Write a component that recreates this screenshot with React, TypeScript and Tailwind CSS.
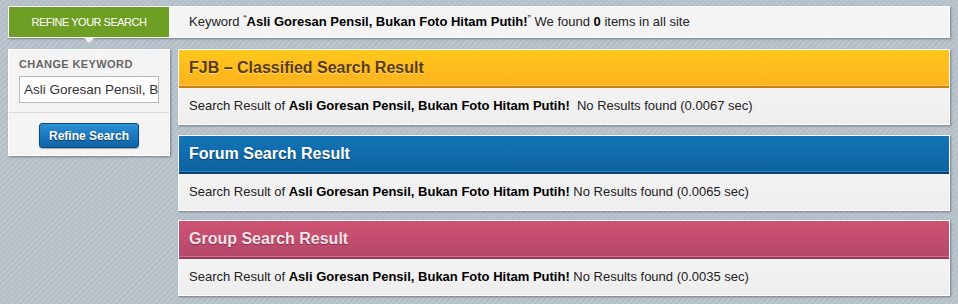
import React from "react";

const font = { fontFamily: '"Liberation Sans", Arial, sans-serif' };

function Panel({
  title,
  headerClass,
  titleClass,
  lineClass,
  keyword,
  tail,
}: {
  title: string;
  headerClass: string;
  titleClass: string;
  lineClass: string;
  keyword: string;
  tail: string;
}) {
  return (
    <div className="border border-white shadow-[1px_1px_2px_rgba(0,0,0,0.35)]">
      <div className={`h-[35px] flex items-center px-[10px] ${headerClass}`}>
        <span className={`text-[16px] font-bold ${titleClass}`}>{title}</span>
      </div>
      <div className={lineClass} />
      <div className="h-[36px] flex items-center px-[10px] bg-[linear-gradient(#f3f3f3,#eeeeee)] text-[13px] text-[#222] whitespace-pre">
        <span>
          Search Result of <b className="text-black">{keyword}</b>
          {tail}
        </span>
      </div>
    </div>
  );
}

export default function App() {
  const kw = "Asli Goresan Pensil, Bukan Foto Hitam Putih!";
  return (
    <div
      style={font}
      className="w-[958px] h-[304px] overflow-hidden bg-[repeating-linear-gradient(135deg,#b3bec6_0px,#b3bec6_2px,#bac5cd_2px,#bac5cd_4px)] pt-[6px] px-[8px]"
    >
      {/* top bar */}
      <div className="relative h-[32px] bg-[#f4f4f4] border border-white flex items-stretch shadow-[1px_1px_2px_rgba(0,0,0,0.35)]">
        <div className="w-[160px] bg-[#6f9e24] flex items-center justify-center text-white text-[11px] tracking-[-0.5px]">
          REFINE YOUR SEARCH
        </div>
        <div className="flex items-center pl-[20px] text-[13px] text-[#222]">
          <span>
            Keyword <span className="text-[10px] align-top">“</span>
            <b className="text-black">{kw}</b>
            <span className="text-[10px] align-top">”</span> We found <b className="text-black">0</b> items in all site
          </span>
        </div>
        <div className="absolute left-[74px] top-[30px] w-0 h-0 border-l-[6px] border-r-[6px] border-t-[6px] border-l-transparent border-r-transparent border-t-[#f4f4f4]" />
      </div>

      <div className="flex gap-[8px] mt-[11px]">
        {/* left panel */}
        <div className="w-[162px] h-[107px] self-start bg-[#f4f4f4] border border-white shadow-[1px_1px_2px_rgba(0,0,0,0.35)] flex flex-col">
          <div className="px-[10px] pt-[8px]">
            <div className="text-[11px] font-bold tracking-[0.4px] text-[#666] leading-[13px]">CHANGE KEYWORD</div>
            <input
              readOnly
              value="Asli Goresan Pensil, Bukan Foto Hitam Putih!"
              style={font}
              className="block mt-[5px] h-[27px] w-[140px] border border-[#b9b9b9] bg-white pl-[4px] pr-0 text-[13.5px] text-[#333] outline-none"
            />
          </div>
          <div className="mt-[9px] border-t border-[#dadada]" />
          <div className="flex justify-center pt-[10px]">
            <div className="w-[100px] h-[25px] rounded-[3px] border border-[#0b4a7e] bg-[linear-gradient(#2a8fd6,#0d62a6)] flex items-center justify-center text-white text-[12px] font-bold [text-shadow:0_1px_1px_rgba(0,0,0,0.5)] shadow-[0_1px_1px_rgba(0,0,0,0.3)]">
              Refine Search
            </div>
          </div>
        </div>

        {/* results */}
        <div className="flex-1 flex flex-col">
          <Panel
            title="FJB – Classified Search Result"
            headerClass="bg-[linear-gradient(#ffc81c,#ffb21f)]"
            titleClass="text-[#5b3a0e] [text-shadow:0_1px_0_rgba(255,230,150,0.8)]"
            lineClass="h-[3px] border-t border-[#ffc85a] bg-[#d17a0e]"
            keyword={kw}
            tail="  No Results found (0.0067 sec)"
          />
          <div className="h-[10px]" />
          <Panel
            title="Forum Search Result"
            headerClass="bg-[linear-gradient(#1274b6,#0f63a0)]"
            titleClass="text-white [text-shadow:0_1px_1px_rgba(0,0,0,0.4)]"
            lineClass="h-[3px] border-t border-[#2a85c2] bg-[#0b4170]"
            keyword={kw}
            tail=" No Results found (0.0065 sec)"
          />
          <div className="h-[9px]" />
          <Panel
            title="Group Search Result"
            headerClass="bg-[linear-gradient(#cf5373,#b5486a)]"
            titleClass="text-[#f8e1e8] [text-shadow:0_1px_1px_rgba(0,0,0,0.35)]"
            lineClass="h-[3px] border-t border-[#d46e8c] bg-[#983a5a]"
            keyword={kw}
            tail=" No Results found (0.0035 sec)"
          />
        </div>
      </div>
    </div>
  );
}
